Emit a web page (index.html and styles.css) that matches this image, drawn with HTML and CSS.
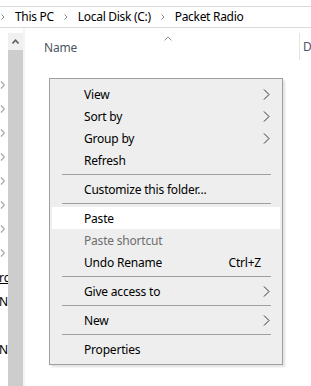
FILE: index.html
```html
<!DOCTYPE html>
<html>
<head>
<meta charset="utf-8">
<link rel="stylesheet" href="styles.css">
</head>
<body>
<div class="addr">
  <svg class="bchev first" width="4" height="6" viewBox="0 0 4 6"><path d="M0.5 0.5 L3 3 L0.5 5.5" fill="none" stroke="#8a8a8a" stroke-width="1"/></svg>
  <span class="crumb">This PC</span>
  <svg class="bchev" width="4" height="6" viewBox="0 0 4 6"><path d="M0.5 0.5 L3 3 L0.5 5.5" fill="none" stroke="#8a8a8a" stroke-width="1"/></svg>
  <span class="crumb">Local Disk (C:)</span>
  <svg class="bchev" width="4" height="6" viewBox="0 0 4 6"><path d="M0.5 0.5 L3 3 L0.5 5.5" fill="none" stroke="#8a8a8a" stroke-width="1"/></svg>
  <span class="crumb">Packet Radio</span>
</div>
<div class="main">
  <div class="nav">
    <div class="nrow"><svg width="5" height="8" viewBox="0 0 5 8"><path d="M1 0.5 L4.5 4 L1 7.5" fill="none" stroke="#a6a6a6" stroke-width="1.2"/></svg></div>
    <div class="nrow"><svg width="5" height="8" viewBox="0 0 5 8"><path d="M1 0.5 L4.5 4 L1 7.5" fill="none" stroke="#a6a6a6" stroke-width="1.2"/></svg></div>
    <div class="nrow"><svg width="5" height="8" viewBox="0 0 5 8"><path d="M1 0.5 L4.5 4 L1 7.5" fill="none" stroke="#a6a6a6" stroke-width="1.2"/></svg></div>
    <div class="nrow"><svg width="5" height="8" viewBox="0 0 5 8"><path d="M1 0.5 L4.5 4 L1 7.5" fill="none" stroke="#a6a6a6" stroke-width="1.2"/></svg></div>
    <div class="nrow"><svg width="5" height="8" viewBox="0 0 5 8"><path d="M1 0.5 L4.5 4 L1 7.5" fill="none" stroke="#a6a6a6" stroke-width="1.2"/></svg></div>
    <div class="nrow"><svg width="5" height="8" viewBox="0 0 5 8"><path d="M1 0.5 L4.5 4 L1 7.5" fill="none" stroke="#a6a6a6" stroke-width="1.2"/></svg></div>
    <div class="nrow"><svg width="5" height="8" viewBox="0 0 5 8"><path d="M1 0.5 L4.5 4 L1 7.5" fill="none" stroke="#a6a6a6" stroke-width="1.2"/></svg></div>
    <div class="nrow"><svg width="5" height="8" viewBox="0 0 5 8"><path d="M1 0.5 L4.5 4 L1 7.5" fill="none" stroke="#a6a6a6" stroke-width="1.2"/></svg></div>
    <div class="nrow"><span class="ntext link">rc</span></div>
    <div class="nrow"><span class="ntext">N</span></div>
    <div class="nrow"></div>
    <div class="nrow"><span class="ntext">Ne</span></div>
  </div>
  <div class="vscroll">
    <div class="sbtn"><svg width="7" height="5" viewBox="0 0 7 5"><path d="M0.5 4.5 L3.5 1.2 L6.5 4.5" fill="none" stroke="#606060" stroke-width="1.6"/></svg></div>
    <div class="thumb"></div>
  </div>
  <div class="content">
    <div class="header">
      <span class="colname">Name</span>
      <svg class="sort" width="8" height="5" viewBox="0 0 8 5"><path d="M0.5 4.5 L4 1 L7.5 4.5" fill="none" stroke="#9a9a9a" stroke-width="1"/></svg>
      <span class="divider"></span>
      <span class="cold">D</span>
    </div>
  </div>
</div>
<div class="menu">
  <div class="item"><span class="label">View</span><span class="arrow"><svg width="7" height="11" viewBox="0 0 7 11"><path d="M1 0.5 L6 5.5 L1 10.5" fill="none" stroke="#333" stroke-width="1"/></svg></span></div>
  <div class="item"><span class="label">Sort by</span><span class="arrow"><svg width="7" height="11" viewBox="0 0 7 11"><path d="M1 0.5 L6 5.5 L1 10.5" fill="none" stroke="#333" stroke-width="1"/></svg></span></div>
  <div class="item"><span class="label">Group by</span><span class="arrow"><svg width="7" height="11" viewBox="0 0 7 11"><path d="M1 0.5 L6 5.5 L1 10.5" fill="none" stroke="#333" stroke-width="1"/></svg></span></div>
  <div class="item"><span class="label">Refresh</span><span class="arrow"></span></div>
  <div class="sep"></div>
  <div class="item"><span class="label">Customize this folder...</span><span class="arrow"></span></div>
  <div class="sep"></div>
  <div class="item hover"><span class="label">Paste</span><span class="arrow"></span></div>
  <div class="item disabled"><span class="label">Paste shortcut</span><span class="arrow"></span></div>
  <div class="item"><span class="label">Undo Rename</span><span class="shortcut">Ctrl+Z</span><span class="arrow"></span></div>
  <div class="sep"></div>
  <div class="item"><span class="label">Give access to</span><span class="arrow"><svg width="7" height="11" viewBox="0 0 7 11"><path d="M1 0.5 L6 5.5 L1 10.5" fill="none" stroke="#333" stroke-width="1"/></svg></span></div>
  <div class="sep"></div>
  <div class="item"><span class="label">New</span><span class="arrow"><svg width="7" height="11" viewBox="0 0 7 11"><path d="M1 0.5 L6 5.5 L1 10.5" fill="none" stroke="#333" stroke-width="1"/></svg></span></div>
  <div class="sep"></div>
  <div class="item"><span class="label">Properties</span><span class="arrow"></span></div>
</div>
</body>
</html>
```
FILE: styles.css
```css
* { box-sizing: border-box; }
html, body { margin: 0; padding: 0; }
body {
  width: 311px;
  height: 386px;
  overflow: hidden;
  background: #ffffff;
  font-family: "Noto Sans", "Open Sans", sans-serif;
  font-size: 12px;
  color: #000;
  position: relative;
}

.addr {
  margin-top: 6px;
  height: 22px;
  border-top: 1px solid #dadada;
  border-bottom: 1px solid #dadada;
  display: flex;
  align-items: center;
  white-space: nowrap;
  line-height: 20px;
  letter-spacing: -0.3px;
}
.bchev { flex: none; margin: 0 10px 0 10px; }
.bchev.first { margin-left: 1px; margin-right: 10px; }
.crumb { color: #000; }

.main {
  display: flex;
  height: 358px;
}
.nav {
  width: 8px;
  flex: none;
  overflow: hidden;
  padding-top: 45px;
}
.nrow {
  height: 24px;
  display: flex;
  align-items: center;
  white-space: nowrap;
  color: #000;
}
.nrow svg { margin-left: 0; flex: none; }
.ntext { margin-left: -1px; }
.ntext.link { text-decoration: underline; }

.vscroll {
  width: 15px;
  flex: none;
  padding-top: 5px;
  display: flex;
  flex-direction: column;
}
.sbtn {
  height: 17px;
  background: #f0f0f0;
  display: flex;
  align-items: center;
  justify-content: center;
}
.thumb {
  flex: 1;
  background: #cdcdcd;
}

.content {
  flex: 1;
  border-left: 2px solid #f4f4f4;
}
.header {
  position: relative;
  height: 38px;
  display: flex;
  align-items: center;
  padding-left: 19px;
  letter-spacing: -0.2px;
}
.colname { color: #4c5564; }
.sort { position: absolute; left: 139px; top: 8px; }
.divider {
  position: absolute;
  left: 274px;
  top: 5px;
  width: 1px;
  height: 27px;
  background: #e3e3e3;
}
.cold { position: absolute; left: 278px; top: 10px; color: #4c5564; }

.menu {
  position: absolute;
  left: 49px;
  top: 78px;
  width: 234px;
  background: #eeeeee;
  border: 1px solid #a0a0a0;
  padding: 4px 2px;
  box-shadow: 2px 2px 2px rgba(0,0,0,0.12);
  letter-spacing: -0.2px;
}
.item {
  height: 22px;
  display: flex;
  align-items: center;
  padding-left: 32px;
  padding-right: 10px;
  white-space: nowrap;
}
.item.hover { background: #ffffff; }
.item.disabled { color: #6d6d6d; }
.label { flex: 1; }
.shortcut { margin-right: 1px; }
.arrow { width: 7px; height: 11px; display: flex; margin-left: 1px; }
.sep {
  height: 1px;
  margin: 3px 9px 3px 10px;
  background: #a0a0a0;
}
```
